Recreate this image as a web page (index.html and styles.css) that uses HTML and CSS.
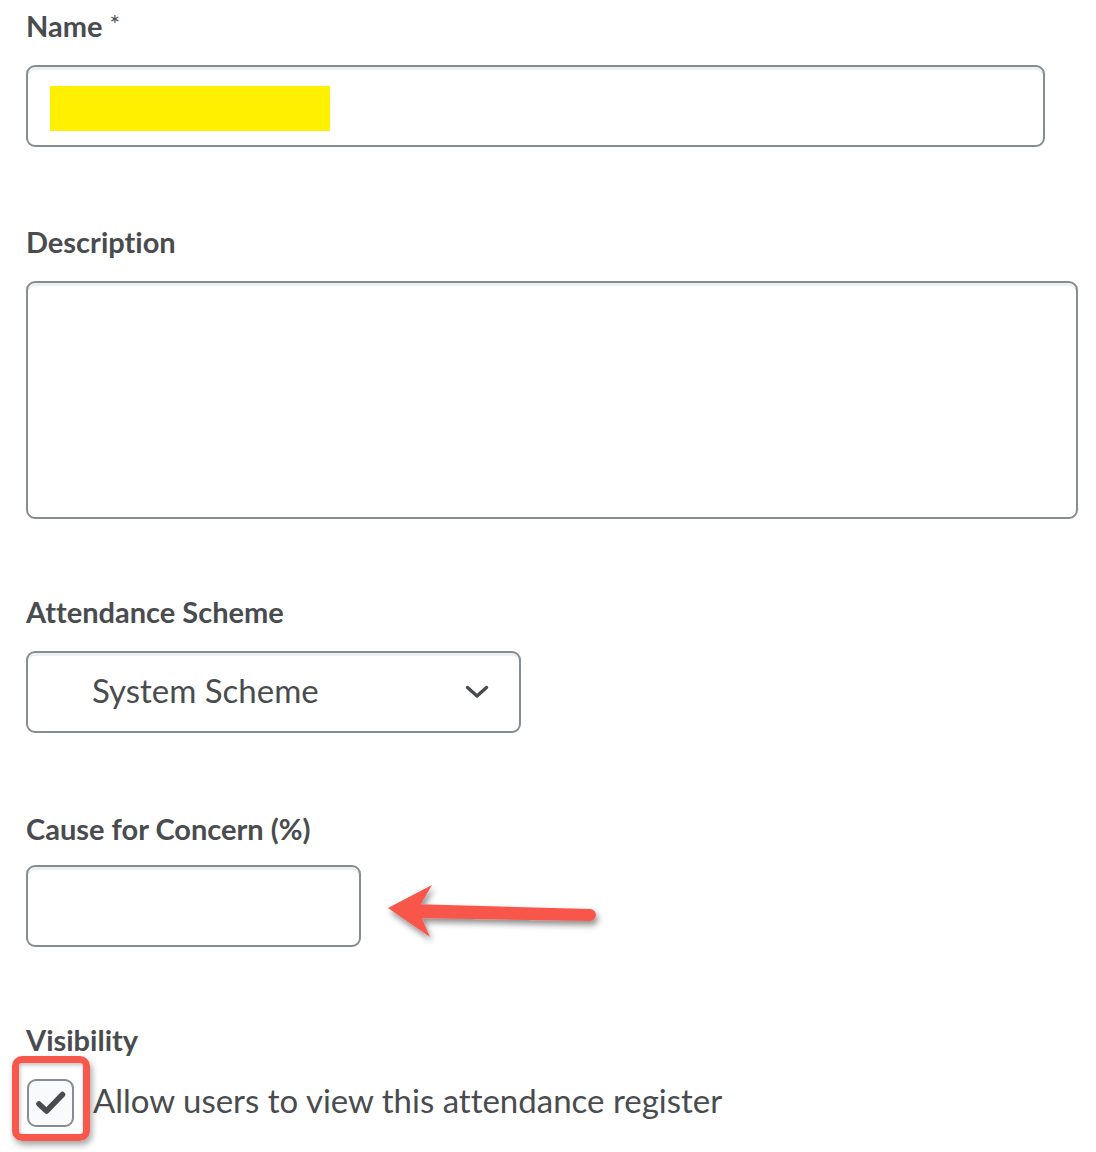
FILE: index.html
```html
<!DOCTYPE html>
<html>
<head>
<meta charset="utf-8">
<link rel="stylesheet" href="styles.css">
</head>
<body>
<form class="form">
  <div class="field f-name">
    <label class="label">Name<span class="req">*</span></label>
    <div class="input input-name"><span class="highlight"></span></div>
  </div>
  <div class="field f-desc">
    <label class="label">Description</label>
    <div class="input textarea"></div>
  </div>
  <div class="field f-scheme">
    <label class="label">Attendance Scheme</label>
    <div class="input select">
      <span class="select-text">System Scheme</span>
      <svg class="chevron" width="24" height="14" viewBox="0 0 24 14"><path d="M2.5 2.5 L12 11 L21.5 2.5" fill="none" stroke="#494c4e" stroke-width="3.4" stroke-linecap="round" stroke-linejoin="round"/></svg>
    </div>
  </div>
  <div class="field f-concern">
    <label class="label">Cause for Concern (%)</label>
    <div class="input small"></div>
  </div>
  <div class="field f-vis">
    <label class="label">Visibility</label>
    <div class="check-row">
      <span class="checkbox">
        <svg width="34" height="28" viewBox="0 0 34 28"><path d="M5 15 L12.5 22 L28.5 5.5" fill="none" stroke="#494c4e" stroke-width="5.5" stroke-linecap="round" stroke-linejoin="round"/></svg>
      </span>
      <span class="check-text">Allow users to view this attendance register</span>
    </div>
  </div>
</form>
<svg class="arrow" width="240" height="80" viewBox="0 0 240 80">
  <defs>
    <filter id="sh" x="-20%" y="-40%" width="140%" height="180%">
      <feDropShadow dx="2" dy="4" stdDeviation="3" flood-color="#000" flood-opacity="0.45"/>
    </filter>
  </defs>
  <g filter="url(#sh)" fill="#f8574b">
    <path d="M30 28 L210 33 A6 6 0 0 1 210 45 L30 42 Z"/>
    <path d="M8 32 L52 9 L38 33 L50 61 Z"/>
  </g>
</svg>
<div class="mark"></div>
</body>
</html>
```
FILE: styles.css
```css
html, body {
  margin: 0;
  padding: 0;
  background: #ffffff;
}
body {
  font-family: Lato, "Open Sans", sans-serif;
  font-variant-ligatures: none;
  color: #494c4e;
  position: relative;
  width: 1096px;
  height: 1152px;
  overflow: hidden;
}
.form {
  padding: 11px 0 0 26px;
  display: flex;
  flex-direction: column;
}
.field {
  display: flex;
  flex-direction: column;
}
.f-name { margin-bottom: 80px; }
.f-desc { margin-bottom: 78px; }
.f-scheme { margin-bottom: 81px; }
.f-concern { margin-bottom: 78px; }
.label {
  font-weight: 700;
  font-size: 29px;
  line-height: 35px;
  margin-top: -3px;
  margin-bottom: 22px;
  color: #494c4e;
}
.f-concern .label {
  margin-bottom: 19px;
}
.req {
  font-weight: 400;
  font-size: 25px;
  line-height: 32px;
  margin-left: 7px;
  vertical-align: top;
}
.input {
  box-sizing: border-box;
  border: 2px solid #868c91;
  border-radius: 9px;
  background: #fff;
  box-shadow: inset 0 3px 0 0 rgba(185, 194, 208, 0.25);
}
.input-name {
  width: 1019px;
  height: 82px;
  padding: 19px 0 0 22px;
}
.highlight {
  display: block;
  width: 280px;
  height: 45px;
  background: #fff000;
}
.textarea {
  width: 1052px;
  height: 238px;
}
.select {
  width: 495px;
  height: 82px;
  display: flex;
  align-items: center;
  justify-content: space-between;
  padding: 0 30px 0 64px;
}
.select-text {
  font-size: 33px;
  line-height: 40px;
  padding-bottom: 4px;
  color: #494c4e;
}
.chevron {
  display: block;
}
.small {
  width: 335px;
  height: 82px;
}
.check-row {
  display: flex;
  align-items: center;
  gap: 20px;
}
.checkbox {
  box-sizing: border-box;
  width: 47px;
  height: 48px;
  border: 2px solid #868c91;
  border-radius: 9px;
  background: #f9fafc;
  display: flex;
  align-items: center;
  justify-content: center;
  margin-left: 1px;
}
.check-text {
  font-size: 33px;
  line-height: 40px;
  padding-bottom: 6px;
  margin-left: -1px;
  color: #494c4e;
}
.arrow {
  position: absolute;
  left: 380px;
  top: 876px;
}
.mark {
  position: absolute;
  left: 12px;
  top: 1056px;
  width: 78px;
  height: 85px;
  box-sizing: border-box;
  border: 7px solid #f8574b;
  border-radius: 10px;
  box-shadow: 2px 4px 6px rgba(0, 0, 0, 0.35), inset 1px 2px 4px rgba(0,0,0,0.25);
}
```
